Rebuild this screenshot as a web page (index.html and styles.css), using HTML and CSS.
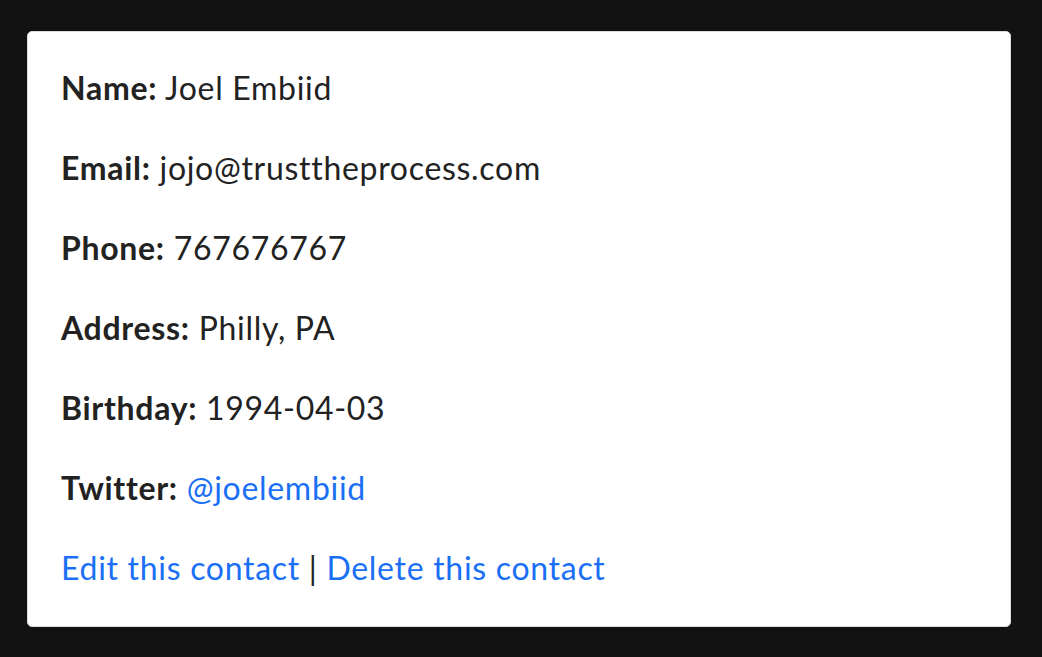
FILE: index.html
```html
<!DOCTYPE html>
<html>
<head>
<meta charset="utf-8">
<link rel="stylesheet" href="styles.css">
</head>
<body>
<div class="card">
  <p><strong>Name:</strong> Joel Embiid</p>
  <p><strong>Email:</strong> jojo@trusttheprocess.com</p>
  <p><strong>Phone:</strong> 767676767</p>
  <p><strong>Address:</strong> Philly, PA</p>
  <p><strong>Birthday:</strong> 1994-04-03</p>
  <p><strong>Twitter:</strong> <a href="#">@joelembiid</a></p>
  <p><a href="#">Edit this contact</a> | <a href="#">Delete this contact</a></p>
</div>
</body>
</html>
```
FILE: styles.css
```css
html, body {
  margin: 0;
  padding: 0;
  background: #121212;
}
body {
  padding: 31px 31px 30px 27px;
  font-family: Lato, "Liberation Sans", sans-serif;
  font-size: 32px;
  line-height: 48px;
  letter-spacing: 0.7px;
  color: #222;
}
.card {
  background: #fff;
  border: 1px solid #dcdcdc;
  border-radius: 5px;
  padding: 32px 34px 34px 33px;
}
.card p {
  margin: 0 0 32px 0;
}
.card p:last-child {
  margin-bottom: 0;
}
strong {
  font-weight: 700;
}
a {
  color: #1a6ff5;
  text-decoration: none;
}
```
